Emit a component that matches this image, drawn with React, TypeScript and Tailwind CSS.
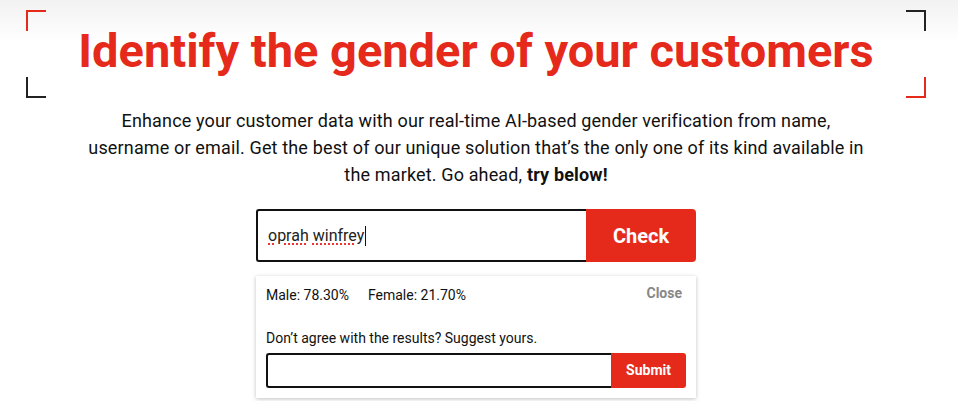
import React from "react";

export default function App() {
  return (
    <div
      className="w-full h-[401px] overflow-hidden pr-[6px] bg-[linear-gradient(to_bottom,#f2f2f2_0px,#ffffff_42px)] text-[#111]"
      style={{ fontFamily: "Roboto, 'Liberation Sans', sans-serif" }}
    >
      <div className="relative h-[99px]">
        <div className="absolute left-[26px] top-[10px] w-[20px] h-[21px] border-l-2 border-t-2 border-[#e52a1c]" />
        <div className="absolute left-[26px] top-[77px] w-[20px] h-[21px] border-l-2 border-b-2 border-[#222]" />
        <div className="absolute left-[906px] top-[10px] w-[20px] h-[21px] border-r-2 border-t-2 border-[#222]" />
        <div className="absolute left-[906px] top-[77px] w-[20px] h-[21px] border-r-2 border-b-2 border-[#e52a1c]" />
        <h1 className="pt-[23px] text-center text-[47px] leading-[56px] font-bold text-[#e52a1c]">
          Identify the gender of your customers
        </h1>
      </div>
      <p className="mx-auto mt-[8px] w-[790px] text-center text-[18px] leading-[27px] tracking-[0.15px] text-[#111]">
        Enhance your customer data with our real-time AI-based gender verification from name, username or email. Get the best of our unique solution that’s the only one of its kind available in the market. Go ahead, <b className="font-bold">try below!</b>
      </p>
      <div className="mx-auto mt-[21px] w-[440px]">
        <div className="flex h-[53px]">
          <div className="flex-1 flex items-center border-2 border-[#111] rounded-l-[3px] border-r-0 pl-[10px] text-[16px] text-[#222]">
            <span className="underline decoration-dotted decoration-[#e33] decoration-2 underline-offset-[3px]">oprah</span>
            <span className="ml-[4px] underline decoration-dotted decoration-[#e33] decoration-2 underline-offset-[3px]">winfrey</span>
            <span className="ml-[1px] w-[1px] h-[20px] bg-[#111]" />
          </div>
          <button className="w-[110px] bg-[#e52a1c] text-white text-[20px] font-bold rounded-r-[4px]">Check</button>
        </div>
        <div className="mt-[14px] bg-white shadow-[0_1px_4px_rgba(0,0,0,0.25)] px-[10px] pt-[10px] pb-[10px] text-[14px]">
          <div className="flex items-start justify-between">
            <div className="flex gap-[19px] pt-[1px] leading-[16px]">
              <span>Male: 78.30%</span>
              <span>Female: 21.70%</span>
            </div>
            <span className="pr-[4px] font-bold text-[#888] leading-[14px]">Close</span>
          </div>
          <div className="mt-[27px] leading-[16px]">Don’t agree with the results? Suggest yours.</div>
          <div className="mt-[7px] flex h-[35px]">
            <div className="flex-1 border-2 border-[#111] border-r-0 rounded-l-[3px]" />
            <button className="w-[75px] bg-[#e52a1c] text-white text-[14px] font-bold rounded-r-[3px]">Submit</button>
          </div>
        </div>
      </div>
    </div>
  );
}
